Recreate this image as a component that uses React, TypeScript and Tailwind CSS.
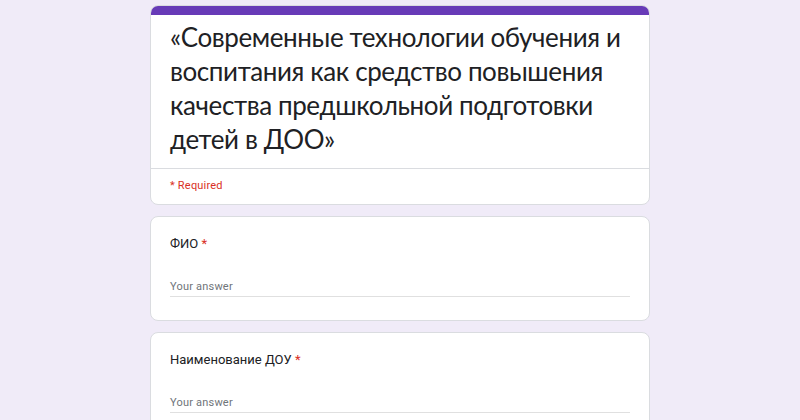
import React from 'react';

const Question = ({ label }: { label: string }) => {
  return (
    <div className="rounded-lg border border-[#dadce0] bg-white px-[19px] pb-[23px] pt-[17px]">
      <div className="text-[13px] leading-[20px] text-[#202124]">
        {label} <span className="text-[#d93025]">*</span>
      </div>
      <div className="mt-[24px] w-full border-b border-[#e0e0e0] text-[11px] leading-[18px] tracking-[0.2px] text-[#70757a]">
        Your answer
      </div>
    </div>
  );
};

const App = () => {
  return (
    <div
      className="min-h-[420px] bg-[#f0ebf8] pt-[5px]"
      style={{ fontFamily: 'Roboto, "Noto Sans", sans-serif' }}
    >
      <div className="mx-auto flex w-[500px] flex-col gap-[11px]">
        <div className="overflow-hidden rounded-lg border border-[#dadce0] bg-white">
          <div className="h-[9px] bg-[#673ab7]" />
          <div className="border-b border-[#dadce0] px-[19px] pb-[12px] pt-[5px]">
            <h1
              className="text-[26px] leading-[34px] tracking-[-0.4px] text-[#202124]"
              style={{ fontFamily: 'Lato, Roboto, sans-serif' }}
            >
              «Современные технологии обучения и воспитания как средство
              повышения качества предшкольной подготовки детей в ДОО»
            </h1>
          </div>
          <div className="px-[19px] pb-[9px] pt-[8px] text-[11px] leading-[18px] tracking-[0.2px] text-[#d93025]">
            * Required
          </div>
        </div>

        <Question label="ФИО" />
        <Question label="Наименование ДОУ" />
      </div>
    </div>
  );
};

export default App;
